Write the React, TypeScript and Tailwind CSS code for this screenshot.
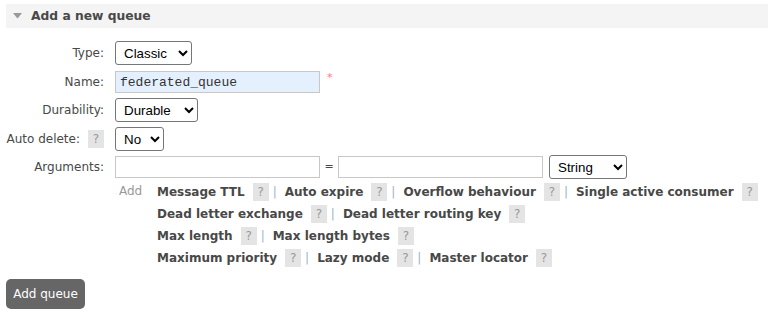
import React from 'react'

const verdana = { fontFamily: '"DejaVu Sans", Verdana, sans-serif' }

// help badge used next to labels and argument links
function Help({ className = '' }: { className?: string }) {
  return (
    <span className={`inline-flex h-[18px] w-[16px] shrink-0 items-center justify-center bg-[#e4e4e4] text-[12px] font-normal text-[#999] ${className}`}>
      ?
    </span>
  )
}

const argRows: string[][] = [
  ['Message TTL', 'Auto expire', 'Overflow behaviour', 'Single active consumer'],
  ['Dead letter exchange', 'Dead letter routing key'],
  ['Max length', 'Max length bytes'],
  ['Maximum priority', 'Lazy mode', 'Master locator'],
]

function Row({ label, children, help }: { label: string; children: React.ReactNode; help?: boolean }) {
  return (
    <div className="flex items-center">
      <div className="flex w-[104px] shrink-0 items-center justify-end whitespace-nowrap">
        <span>{label}</span>
        {help && <Help className="ml-[8px]" />}
      </div>
      <div className="ml-[11px] flex items-center">{children}</div>
    </div>
  )
}

const selectCls =
  'h-[24px] rounded-[3px] border border-[#767676] bg-white pl-[4px] text-[13.33px] text-black font-["Liberation_Sans",Arial,sans-serif]'

export default function App() {
  return (
    <div className="min-h-screen bg-white text-[12px] text-[#484848]" style={verdana}>
      <div className="pt-[4px] pl-[6px]">
        <div className="flex h-[24px] items-center bg-[#f4f4f4]">
          <svg width="9" height="6" viewBox="0 0 9 6" className="ml-[7px]">
            <polygon points="0,0 9,0 4.5,5.5" fill="#999" />
          </svg>
          <h2 className="ml-[9px] text-[12.3px] font-bold">Add a new queue</h2>
        </div>
      </div>

      <div className="mt-[13px] flex flex-col">
        <Row label="Type:">
          <select className={`${selectCls} w-[77px]`} defaultValue="Classic">
            <option>Classic</option>
            <option>Quorum</option>
          </select>
        </Row>

        <div className="mt-[6px]">
          <Row label="Name:">
            <input
              type="text"
              defaultValue="federated_queue"
              className='h-[22px] w-[205px] border border-[#c8c8c8] bg-[#e5f0fe] px-[4px] text-[13px] text-[#333] font-["Liberation_Mono",monospace]'
            />
            <span className="ml-[7px] -mt-[8px] text-[11px] text-[#f77]">*</span>
          </Row>
        </div>

        <div className="mt-[5px]">
          <Row label="Durability:">
            <select className={`${selectCls} w-[83px]`} defaultValue="Durable">
              <option>Durable</option>
              <option>Transient</option>
            </select>
          </Row>
        </div>

        <div className="mt-[5px]">
          <Row label="Auto delete:" help>
            <select className={`${selectCls} w-[49px]`} defaultValue="No">
              <option>No</option>
              <option>Yes</option>
            </select>
          </Row>
        </div>

        <div className="mt-[4px]">
          <Row label="Arguments:">
            <input type="text" className="h-[22px] w-[205px] border border-[#c8c8c8] bg-white" />
            <span className="w-[18px] text-center text-[11px]">=</span>
            <input type="text" className="h-[22px] w-[205px] border border-[#c8c8c8] bg-white" />
            <select className={`${selectCls} ml-[6px] w-[78px]`} defaultValue="String">
              <option>String</option>
              <option>Number</option>
              <option>Boolean</option>
            </select>
          </Row>
        </div>

        <div className="mt-[2px] flex">
          <div className="ml-[119px] w-[38px] shrink-0 pt-[1px] text-[#999]">Add</div>
          <div className="flex flex-col">
            {argRows.map((row, i) => (
              <div key={i} className="flex h-[22px] items-center whitespace-nowrap">
                {row.map((name, j) => (
                  <React.Fragment key={name}>
                    <span className="font-bold">{name}</span>
                    <Help className="ml-[8px]" />
                    {j < row.length - 1 && <span className="ml-[4px] mr-[8px] text-[#9db4c8]">|</span>}
                  </React.Fragment>
                ))}
              </div>
            ))}
          </div>
        </div>
      </div>

      <button className="ml-[6px] mt-[10px] h-[30px] w-[79px] rounded-[5px] bg-[#666] text-[12px] text-white">
        Add queue
      </button>
    </div>
  )
}
